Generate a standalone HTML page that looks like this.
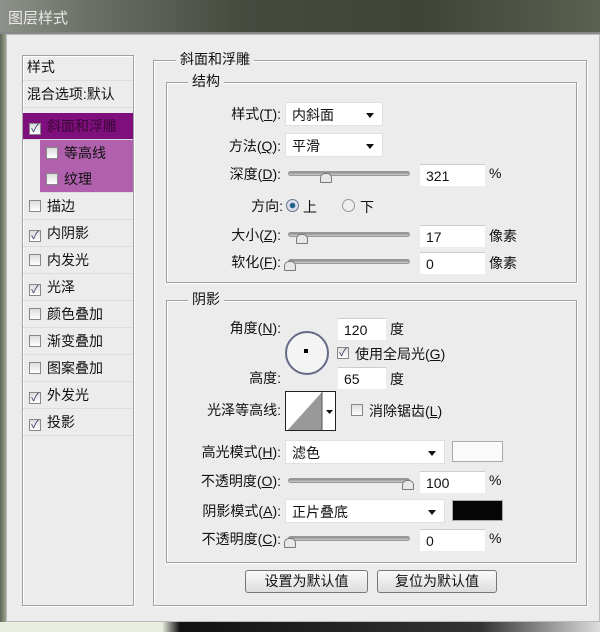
<!DOCTYPE html><html><head><meta charset="utf-8"><style>
*{margin:0;padding:0;box-sizing:border-box}
body{width:600px;height:632px;overflow:hidden;background:#3a3f35;font-family:"Liberation Sans","Noto Sans CJK SC",sans-serif;font-size:14px;color:#111;position:relative}
.a{position:absolute}
#title{left:0;top:0;width:600px;height:34px;background:linear-gradient(90deg,#8d918a 0%,#6a7065 15%,#464b40 40%,#3e4438 70%,#5a6150 100%);border-bottom:2px solid #888}
#body{left:6px;top:34px;width:594px;height:588px;background:#ececec;border:1px solid #bbb}
.box{position:absolute;border:1px solid #a0a0a0;box-shadow:1px 1px 0 #fff inset,1px 1px 0 #fff}
.lg{position:absolute;background:#ececec;padding:0 4px;line-height:18px}
.row{position:absolute;left:23px;width:110px;height:27px;line-height:27px;border-bottom:1px solid #ddd}
.cb{display:inline-block;width:12px;height:12px;border:1px solid #888;background:linear-gradient(#ddd,#fff);vertical-align:-1px;margin:0 6px 0 6px;position:relative;font-size:11px;line-height:10px;color:#336;text-align:center}
.lb{position:absolute;right:319px;text-align:right;line-height:18px;white-space:nowrap}
.inp{position:absolute;background:#fff;border-top:1px solid #ccc;height:22px;line-height:22px;padding-left:6px}
.dd{position:absolute;background:#fff;height:24px;line-height:24px;padding-left:6px;border:1px solid #e0e0e0}
.dd:after{content:"";position:absolute;right:8px;top:10px;border:4px solid transparent;border-top:5px solid #111}
.tr{position:absolute;left:288px;width:122px;height:5px;border-radius:3px;background:linear-gradient(#888,#ccc);border:1px solid #999}
.th{position:absolute;width:12px;height:10px;background:#e8e8e8;border:1px solid #777;border-radius:5px 5px 1px 1px}
.btn{position:absolute;top:570px;height:23px;line-height:21px;text-align:center;border:1px solid #777;border-radius:3px;background:linear-gradient(#fafafa,#ddd)}
</style></head><body>
<div id="title" class="a"><span class="a" style="left:8px;top:7px;color:#e8e8e8;font-size:15px">图层样式</span></div>
<div id="body" class="a"></div>
<div class="box" style="left:22px;top:55px;width:112px;height:551px;background:#ececec"></div>
<div class="row" style="top:54px">&nbsp;样式</div>
<div class="row" style="top:81px;">&nbsp;混合选项:默认</div>
<div class="row" style="top:113px;background:#7f0f7d;color:#3a0838"><span class="cb">✓</span>斜面和浮雕</div>
<div class="row" style="top:140px;left:40px;width:93px;background:#b060ac"><span class="cb"></span>等高线</div>
<div class="row" style="top:166px;left:40px;width:93px;background:#b060ac"><span class="cb"></span>纹理</div>
<div class="row" style="top:193px"><span class="cb"></span>描边</div>
<div class="row" style="top:220px"><span class="cb">✓</span>内阴影</div>
<div class="row" style="top:247px"><span class="cb"></span>内发光</div>
<div class="row" style="top:274px"><span class="cb">✓</span>光泽</div>
<div class="row" style="top:301px"><span class="cb"></span>颜色叠加</div>
<div class="row" style="top:328px"><span class="cb"></span>渐变叠加</div>
<div class="row" style="top:355px"><span class="cb"></span>图案叠加</div>
<div class="row" style="top:382px"><span class="cb">✓</span>外发光</div>
<div class="row" style="top:409px"><span class="cb">✓</span>投影</div>

<div class="box" style="left:153px;top:60px;width:434px;height:546px"></div>
<div class="lg" style="left:176px;top:50px">斜面和浮雕</div>
<div class="box" style="left:166px;top:82px;width:411px;height:201px"></div>
<div class="lg" style="left:188px;top:72px">结构</div>
<div class="lb" style="top:105px">样式(<u>T</u>):</div><div class="dd" style="left:285px;top:102px;width:98px">内斜面</div>
<div class="lb" style="top:137px">方法(<u>Q</u>):</div><div class="dd" style="left:285px;top:133px;width:98px">平滑</div>
<div class="lb" style="top:165px">深度(<u>D</u>):</div><div class="tr" style="top:171px"></div><div class="th" style="left:320px;top:173px"></div>
<div class="inp" style="left:420px;top:164px;width:65px">321</div><div class="a" style="left:489px;top:165px">%</div>
<div class="lb" style="top:197px;right:317px">方向:</div>
<div class="a" style="left:286px;top:199px;width:13px;height:13px;border-radius:50%;border:1px solid #678;background:radial-gradient(#1b5f8a 30%,#dde 40%)"></div><div class="a" style="left:303px;top:197px">上</div>
<div class="a" style="left:342px;top:199px;width:13px;height:13px;border-radius:50%;border:1px solid #999;background:#eee"></div><div class="a" style="left:360px;top:197px">下</div>
<div class="lb" style="top:226px">大小(<u>Z</u>):</div><div class="tr" style="top:232px"></div><div class="th" style="left:296px;top:234px"></div>
<div class="inp" style="left:420px;top:225px;width:65px">17</div><div class="a" style="left:489px;top:226px">像素</div>
<div class="lb" style="top:253px">软化(<u>F</u>):</div><div class="tr" style="top:259px"></div><div class="th" style="left:284px;top:261px"></div>
<div class="inp" style="left:420px;top:252px;width:65px">0</div><div class="a" style="left:489px;top:253px">像素</div>

<div class="box" style="left:166px;top:300px;width:411px;height:263px"></div>
<div class="lg" style="left:188px;top:290px">阴影</div>
<div class="lb" style="top:319px">角度(<u>N</u>):</div>
<div class="inp" style="left:338px;top:318px;width:48px">120</div><div class="a" style="left:390px;top:319px">度</div>
<div class="a" style="left:285px;top:331px;width:44px;height:44px;border-radius:50%;border:2px solid #666a88;background:#f4f4f4"></div>
<div class="a" style="left:304px;top:349px;width:4px;height:4px;background:#000"></div>
<span class="cb" style="position:absolute;left:337px;top:347px;margin:0">✓</span><div class="a" style="left:355px;top:344px">使用全局光(<u>G</u>)</div>
<div class="lb" style="top:369px">高度:</div>
<div class="inp" style="left:338px;top:367px;width:48px">65</div><div class="a" style="left:390px;top:369px">度</div>
<div class="lb" style="top:401px">光泽等高线:</div>
<div class="a" style="left:285px;top:391px;width:51px;height:40px;border:1px solid #222;background:#fff;overflow:hidden"><svg width="51" height="40"><polygon points="0,40 36,0 36,40" fill="#999"/><line x1="36" y1="0" x2="36" y2="40" stroke="#555"/><polygon points="40,18 47,18 43.5,22" fill="#111"/></svg></div>
<span class="cb" style="position:absolute;left:351px;top:404px;margin:0"></span><div class="a" style="left:369px;top:401px">消除锯齿(<u>L</u>)</div>
<div class="lb" style="top:443px">高光模式(<u>H</u>):</div><div class="dd" style="left:285px;top:440px;width:160px">滤色</div>
<div class="a" style="left:452px;top:441px;width:51px;height:21px;background:#fafafa;border:1px solid #aaa"></div>
<div class="lb" style="top:472px">不透明度(<u>O</u>):</div><div class="tr" style="top:478px"></div><div class="th" style="left:402px;top:480px"></div>
<div class="inp" style="left:420px;top:471px;width:65px">100</div><div class="a" style="left:489px;top:472px">%</div>
<div class="lb" style="top:502px">阴影模式(<u>A</u>):</div><div class="dd" style="left:285px;top:499px;width:160px">正片叠底</div>
<div class="a" style="left:452px;top:500px;width:51px;height:21px;background:#050505;border:1px solid #aaa"></div>
<div class="lb" style="top:530px">不透明度(<u>C</u>):</div><div class="tr" style="top:536px"></div><div class="th" style="left:284px;top:538px"></div>
<div class="inp" style="left:420px;top:529px;width:65px">0</div><div class="a" style="left:489px;top:530px">%</div>
<div class="btn" style="left:245px;width:123px">设置为默认值</div>
<div class="btn" style="left:377px;width:120px">复位为默认值</div>
<div class="a" style="left:0;top:622px;width:600px;height:10px;background:linear-gradient(90deg,#e8eee0 0%,#e8eee0 27%,#111 30%,#333 80%,#ddd 100%)"></div>
<div class="a" style="left:0;top:34px;width:6px;height:588px;background:linear-gradient(90deg,#5d6655,#9ba58f)"></div>
</body></html>
